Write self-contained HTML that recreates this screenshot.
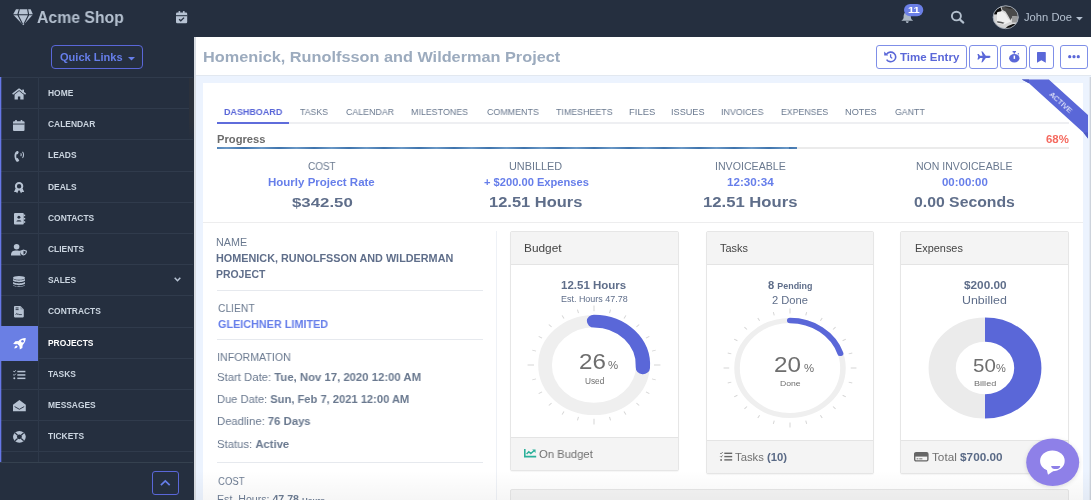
<!DOCTYPE html>
<html><head><meta charset="utf-8"><style>
html,body{margin:0;padding:0;}
body{width:1091px;height:500px;overflow:hidden;position:relative;background:#252f3f;font-family:"Liberation Sans",sans-serif;}
.t{position:absolute;white-space:nowrap;transform-origin:0 0;will-change:transform;}
.t b{font-weight:700;}
.r{position:absolute;box-sizing:border-box;}
svg{position:absolute;overflow:visible;}


</style></head><body>
<div class="r" style="left:194px;top:37px;width:897px;height:38px;background:#fff"></div>
<div class="r" style="left:194px;top:75px;width:897px;height:1px;background:#e2e8f0"></div>
<div class="r" style="left:196px;top:76px;width:895px;height:424px;background:#ecf3fe"></div>
<div class="r" style="left:194px;top:37px;width:2px;height:463px;background:#d9dde3"></div>
<div class="r" style="left:1089px;top:77px;width:1px;height:423px;background:#e2e8f1"></div>
<div class="r" style="left:1090px;top:77px;width:1px;height:423px;background:#cdd3dc"></div>
<div class="r" style="left:203px;top:83px;width:880px;height:417px;background:#fff"></div>
<div class="r" style="left:217px;top:122px;width:852px;height:2px;background:#eeeff2"></div>
<div class="r" style="left:217px;top:122px;width:72px;height:2px;background:#5f6cdb"></div>
<div class="r" style="left:217px;top:147px;width:852px;height:2px;background:#ebebeb"></div>
<div class="r" style="left:217px;top:147px;width:580px;height:2px;background:repeating-linear-gradient(90deg,#3f74ad 0px,#6a98c6 17.5px,#3f74ad 35px);background-position:-8px 0"></div>
<div class="r" style="left:203px;top:222px;width:880px;height:1px;background:#ededee"></div>
<div class="r" style="left:217px;top:290px;width:266px;height:1px;background:#e6e9ee"></div>
<div class="r" style="left:217px;top:339px;width:266px;height:1px;background:#e6e9ee"></div>
<div class="r" style="left:217px;top:462px;width:266px;height:1px;background:#e6e9ee"></div>
<div class="r" style="left:496px;top:231px;width:1px;height:269px;background:#eef1f6"></div>
<div class="r" style="left:510px;top:231px;width:169px;height:240px;background:#fff;border:1px solid #e6e6e6;border-radius:2px;box-shadow:0 1px 1px rgba(0,0,0,.04)"></div>
<div class="r" style="left:511px;top:232px;width:167px;height:33px;background:#f4f4f4;border-bottom:1px solid #e4e4e4"></div>
<div class="r" style="left:511px;top:437px;width:167px;height:33px;background:#f4f4f4;border-top:1px solid #e4e4e4"></div>
<div class="r" style="left:706px;top:231px;width:168px;height:243px;background:#fff;border:1px solid #e6e6e6;border-radius:2px;box-shadow:0 1px 1px rgba(0,0,0,.04)"></div>
<div class="r" style="left:707px;top:232px;width:166px;height:33px;background:#f4f4f4;border-bottom:1px solid #e4e4e4"></div>
<div class="r" style="left:707px;top:440px;width:166px;height:33px;background:#f4f4f4;border-top:1px solid #e4e4e4"></div>
<div class="r" style="left:900px;top:231px;width:169px;height:243px;background:#fff;border:1px solid #e6e6e6;border-radius:2px;box-shadow:0 1px 1px rgba(0,0,0,.04)"></div>
<div class="r" style="left:901px;top:232px;width:167px;height:33px;background:#f4f4f4;border-bottom:1px solid #e4e4e4"></div>
<div class="r" style="left:901px;top:440px;width:167px;height:33px;background:#f4f4f4;border-top:1px solid #e4e4e4"></div>
<div class="r" style="left:510px;top:489px;width:559px;height:31px;background:#f4f4f4;border:1px solid #e6e6e6;border-radius:2px"></div>
<div class="r" style="left:194px;top:470px;width:897px;height:30px;background:linear-gradient(rgba(0,0,0,0),rgba(0,0,0,.035))"></div>
<div class="r" style="left:0px;top:77.0px;width:193px;height:1.0px;background:#303b4c"></div>
<div class="r" style="left:0px;top:108.2px;width:193px;height:1.0px;background:#303b4c"></div>
<div class="r" style="left:0px;top:139.4px;width:193px;height:1.0px;background:#303b4c"></div>
<div class="r" style="left:0px;top:170.6px;width:193px;height:1.0px;background:#303b4c"></div>
<div class="r" style="left:0px;top:201.8px;width:193px;height:1.0px;background:#303b4c"></div>
<div class="r" style="left:0px;top:233.0px;width:193px;height:1.0px;background:#303b4c"></div>
<div class="r" style="left:0px;top:264.2px;width:193px;height:1.0px;background:#303b4c"></div>
<div class="r" style="left:0px;top:295.4px;width:193px;height:1.0px;background:#303b4c"></div>
<div class="r" style="left:0px;top:326.6px;width:193px;height:1.0px;background:#303b4c"></div>
<div class="r" style="left:0px;top:357.8px;width:193px;height:1.0px;background:#303b4c"></div>
<div class="r" style="left:0px;top:389.0px;width:193px;height:1.0px;background:#303b4c"></div>
<div class="r" style="left:0px;top:420.2px;width:193px;height:1.0px;background:#303b4c"></div>
<div class="r" style="left:0px;top:451.4px;width:193px;height:1.0px;background:#303b4c"></div>
<div class="r" style="left:189px;top:78px;width:5px;height:62px;background:linear-gradient(#2b313c 70%,rgba(43,49,60,0))"></div>
<div class="r" style="left:0px;top:462px;width:193px;height:1px;background:#35414f"></div>
<div class="r" style="left:38px;top:77px;width:1px;height:385px;background:#2e394a"></div>
<div class="r" style="left:0px;top:77px;width:1px;height:385px;background:#6677e6"></div>
<div class="r" style="left:1px;top:77px;width:1px;height:385px;background:rgba(102,119,230,.3)"></div>
<div class="r" style="left:0px;top:326px;width:38px;height:35px;background:#6a7fe4"></div>
<div class="r" style="left:152px;top:471px;width:27px;height:24px;border:1px solid #5a67d8;border-radius:3px"></div>
<div class="r" style="left:51px;top:45px;width:92px;height:24px;border:1.5px solid #5a67d8;border-radius:4px"></div>
<div class="r" style="left:876px;top:45px;width:91px;height:24px;border:1px solid #7f8fe8;border-radius:3px;background:#fff"></div>
<div class="r" style="left:969px;top:45px;width:29px;height:24px;border:1px solid #7f8fe8;border-radius:3px;background:#fff"></div>
<div class="r" style="left:1000px;top:45px;width:27px;height:24px;border:1px solid #7f8fe8;border-radius:3px;background:#fff"></div>
<div class="r" style="left:1029px;top:45px;width:25px;height:24px;border:1px solid #7f8fe8;border-radius:3px;background:#fff"></div>
<div class="r" style="left:1060px;top:45px;width:28px;height:24px;border:1px solid #7f8fe8;border-radius:3px;background:#fff"></div>
<svg style="left:524.2px;top:294.7px;transform:scaleX(1.115);transform-origin:70.0px 70.0px" width="140" height="140" viewBox="0 0 140 140"><circle cx="70.0" cy="70.0" r="43.9" stroke="#efefef" stroke-width="12.3" fill="none"/><path d="M70.0,26.1 A43.9,43.9 0 0 1 113.813,72.757" stroke="#5a67d8" stroke-width="12.8" fill="none" stroke-linecap="round"/><path d="M70.00,16.20 L70.00,10.40 M83.92,18.03 L84.83,14.65 M96.90,23.41 L98.65,20.38 M108.04,31.96 L110.52,29.48 M116.59,43.10 L119.62,41.35 M121.97,56.08 L125.35,55.17 M123.80,70.00 L129.60,70.00 M121.97,83.92 L125.35,84.83 M116.59,96.90 L119.62,98.65 M108.04,108.04 L110.52,110.52 M96.90,116.59 L98.65,119.62 M83.92,121.97 L84.83,125.35 M70.00,123.80 L70.00,129.60 M56.08,121.97 L55.17,125.35 M43.10,116.59 L41.35,119.62 M31.96,108.04 L29.48,110.52 M23.41,96.90 L20.38,98.65 M18.03,83.92 L14.65,84.83 M16.20,70.00 L10.40,70.00 M18.03,56.08 L14.65,55.17 M23.41,43.10 L20.38,41.35 M31.96,31.96 L29.48,29.48 M43.10,23.41 L41.35,20.38 M56.08,18.03 L55.17,14.65" stroke="#d6d6d6" stroke-width="0.9" fill="none"/></svg>
<svg style="left:719.5px;top:298.0px;transform:scaleX(1.115);transform-origin:70.0px 70.0px" width="140" height="140" viewBox="0 0 140 140"><circle cx="70.0" cy="70.0" r="47.5" stroke="#efefef" stroke-width="5.0" fill="none"/><path d="M70.0,22.5 A47.5,47.5 0 0 1 115.175,55.322" stroke="#5a67d8" stroke-width="5.4" fill="none" stroke-linecap="round"/><path d="M70.00,15.50 L70.00,10.40 M84.11,17.36 L84.96,14.17 M97.25,22.80 L98.90,19.94 M108.54,31.46 L110.87,29.13 M117.20,42.75 L120.06,41.10 M122.64,55.89 L125.83,55.04 M124.50,70.00 L129.60,70.00 M122.64,84.11 L125.83,84.96 M117.20,97.25 L120.06,98.90 M108.54,108.54 L110.87,110.87 M97.25,117.20 L98.90,120.06 M84.11,122.64 L84.96,125.83 M70.00,124.50 L70.00,129.60 M55.89,122.64 L55.04,125.83 M42.75,117.20 L41.10,120.06 M31.46,108.54 L29.13,110.87 M22.80,97.25 L19.94,98.90 M17.36,84.11 L14.17,84.96 M15.50,70.00 L10.40,70.00 M17.36,55.89 L14.17,55.04 M22.80,42.75 L19.94,41.10 M31.46,31.46 L29.13,29.13 M42.75,22.80 L41.10,19.94 M55.89,17.36 L55.04,14.17" stroke="#d6d6d6" stroke-width="0.9" fill="none"/></svg>
<svg style="left:915.4px;top:298.1px;transform:scaleX(1.115);transform-origin:70.0px 70.0px" width="140" height="140" viewBox="0 0 140 140"><path d="M70.0,31.6 A38.4,38.4 0 0 1 70.0,108.4" stroke="#5a67d8" stroke-width="24.4" fill="none"/><path d="M70.0,108.4 A38.4,38.4 0 0 1 70.0,31.6" stroke="#ebebeb" stroke-width="24.4" fill="none"/></svg>
<svg style="left:1018px;top:75px" width="73" height="68" viewBox="1018 75 73 68"><polygon points="1021.8,79.4 1048.8,79.4 1088,115 1088,138.4 1083.3,132.6 1029,83.2" fill="#5a67d8"/><polygon points="1021.8,79.4 1029,79.4 1029,83.2" fill="#4d5ac4"/><polygon points="1083.3,132.6 1088,132.6 1088,138.4" fill="#4d5ac4"/></svg>
<div class="t" style="left:1043px;top:98px;width:36px;text-align:center;font-size:7.6px;line-height:9px;color:#fff;transform:rotate(42deg);transform-origin:50% 50%">ACTIVE</div>
<svg style="left:1024px;top:436px;filter:drop-shadow(0 1px 2px rgba(0,0,0,.12))" width="58" height="54" viewBox="1024 436 58 54"><ellipse cx="1052.7" cy="462.3" rx="26.5" ry="23.8" fill="#8e80e8"/><ellipse cx="1052.4" cy="460.9" rx="12.3" ry="10.4" fill="#fff"/><polygon points="1046.5,468.5 1054,470.5 1048,474.8" fill="#fff"/><path d="M1051.1,465.9 H1060.3 C1060,468 1058,469.1 1055.7,469.1 C1053.4,469.1 1051.4,468 1051.1,465.9 Z" fill="#8e80e8"/></svg>
<svg style="left:13px;top:8.5px;" width="20" height="16.5" viewBox="0 0 20 16.5"><polygon points="0,5.4 3,0.2 17.7,0.2 20,5.4 10.3,16.3" fill="#b7c3d3"/><path d="M0,5.8 H20 M6.4,0.2 L4.8,5.8 L9.5,15 M14.6,0.2 L15.7,5.8 L11,15" stroke="#252f3f" stroke-width="1.1" fill="none"/></svg>
<svg style="left:176px;top:10.8px;" width="11.2" height="12.2" viewBox="0 0 11.2 12.2"><rect x="0" y="1.5" width="11.2" height="10.7" rx="1.2" fill="#b7c3d3"/><rect x="2.6" y="0" width="1.6" height="3" rx=".6" fill="#b7c3d3"/><rect x="7" y="0" width="1.6" height="3" rx=".6" fill="#b7c3d3"/><rect x="0" y="4.2" width="11.2" height="1" fill="#252f3f"/><path d="M3.1,8.2 L4.8,9.8 L8.1,6.6" stroke="#252f3f" stroke-width="1.3" fill="none"/></svg>
<svg style="left:127.5px;top:57px;" width="7" height="3.5" viewBox="0 0 7 3.5"><polygon points="0,0 7,0 3.5,3.5" fill="#667eea"/></svg>
<svg style="left:900.5px;top:11px;" width="12.5" height="12.5" viewBox="0 0 12.5 12.5"><path d="M6.25,1 C3,1 2.6,4 2.6,6.5 C2.6,8 1.2,9 0.4,9.7 H12.1 C11.3,9 9.9,8 9.9,6.5 C9.9,4 9.5,1 6.25,1 Z" fill="#aab6c4"/><path d="M4.8,10.2 H7.7 C7.7,11.2 7,12 6.25,12 C5.5,12 4.8,11.2 4.8,10.2Z" fill="#aab6c4"/></svg>
<svg style="left:903.8px;top:4.1px;" width="19.3" height="12.2" viewBox="0 0 19.3 12.2"><rect x="0" y="0" width="19.3" height="12.2" rx="6.1" fill="#6b7fe6"/></svg>
<svg style="left:950px;top:9.5px;" width="15" height="14" viewBox="0 0 15 14"><ellipse cx="6.4" cy="6.1" rx="4.5" ry="4.3" stroke="#b3bfcd" stroke-width="1.9" fill="none"/><path d="M9.7,9.4 L13.3,12.6" stroke="#b3bfcd" stroke-width="2.1" stroke-linecap="round"/></svg>
<svg style="left:992px;top:4.5px" width="27.5" height="24.5" viewBox="992 4.5 27.5 24.5"><defs><clipPath id="av"><ellipse cx="1005.7" cy="16.75" rx="12.6" ry="11.45"/></clipPath></defs><g clip-path="url(#av)"><rect x="992" y="4" width="28" height="26" fill="#d4d4d4"/><path d="M1001,5 L1019,5 L1019,16.5 L1013,15.5 L1010.5,19.5 L1008,15 L1005.5,11 L1002.5,9.5 Z" fill="#4a4a4a"/><path d="M1003,6 L1016,6 L1017,9 L1009,8 Z" fill="#2a2a2a"/><path d="M1012,15.5 L1019,16 L1019,22 L1012,22 Z" fill="#9a9a9a"/><path d="M992,13.8 L997,8.5 L1000.6,6.8 L1001.6,10 L999.8,12.3 L996.2,14 Z" fill="#0a0a0a"/><path d="M997,12 C1000,10 1004,11 1006,14 C1007,17 1009,19 1011,21 L1004,24 L997,23 Z" fill="#efefef"/><path d="M997,21 C999,20.5 1002,21.5 1004.5,22.3 L1003,23.2 C1000,22.8 998,22.5 997,21.8 Z" fill="#555"/><path d="M1004,29 L1008,25.6 L1013,23.4 L1016,23.6 L1017,29 Z" fill="#0d0d0d"/></g><ellipse cx="1005.7" cy="16.75" rx="12.6" ry="11.45" stroke="#a3acb8" stroke-width="0.9" fill="none"/></svg>
<svg style="left:1076.3px;top:16.9px;" width="6.8" height="3.4" viewBox="0 0 6.8 3.4"><polygon points="0,0 6.8,0 3.4,3.4" fill="#b4c0cf"/></svg>
<svg style="left:12px;top:88.8px;" width="14.2" height="10.5" viewBox="0 0 14.2 10.5"><path d="M0.6,5.2 L7.1,0.2 L13.6,5.2" stroke="#b7c3d3" stroke-width="1.5" fill="none" stroke-linejoin="round"/><rect x="10.2" y="0.6" width="1.8" height="3.2" fill="#b7c3d3"/><path d="M2.6,5.4 L7.1,1.9 L11.6,5.4 V10.5 H8.3 V7.4 H5.9 V10.5 H2.6 Z" fill="#b7c3d3"/></svg>
<svg style="left:13.4px;top:120px;" width="11.5" height="11" viewBox="0 0 11.5 11"><rect x="0" y="1.3" width="11.5" height="9.7" rx="1" fill="#b7c3d3"/><rect x="2.2" y="0" width="1.6" height="2.2" fill="#b7c3d3"/><rect x="7.7" y="0" width="1.6" height="2.2" fill="#b7c3d3"/><rect x="0" y="3.6" width="11.5" height=".9" fill="#252f3f"/></svg>
<svg style="left:13.6px;top:151.2px;" width="10.6" height="11.2" viewBox="0 0 10.6 11.2"><path d="M2.4,0.4 C0.2,1.6 -0.4,6.4 2.2,10.2 C2.7,10.9 3.6,11.1 4.3,10.6 L5.3,9.6 L3.7,7 L2.7,7.3 C2.1,5.9 2.1,4.4 2.8,3.1 L3.8,3.3 L4.8,0.9 L3.7,0.1 C3.3,-0.1 2.8,0.1 2.4,0.4Z" fill="#b7c3d3"/><path d="M6.7,2.4 C7.4,3 7.4,4.6 6.7,5.2 M8.5,0.8 C9.9,2.1 9.9,5.5 8.5,6.8" stroke="#b7c3d3" stroke-width="1.1" fill="none"/></svg>
<svg style="left:14px;top:181.8px;" width="10.2" height="11.2" viewBox="0 0 10.2 11.2"><circle cx="5.1" cy="4.3" r="3.2" stroke="#b7c3d3" stroke-width="2" fill="none"/><path d="M1.6,6.6 L0,10 L2.1,9.9 L3.2,11.2 L4.6,8.2 Z M8.6,6.6 L10.2,10 L8.1,9.9 L7,11.2 L5.6,8.2 Z" fill="#b7c3d3"/></svg>
<svg style="left:13.8px;top:213.2px;" width="11.2" height="11.4" viewBox="0 0 11.2 11.4"><rect x="0" y="0" width="9.8" height="11.4" rx="1" fill="#b7c3d3"/><rect x="9.8" y="1.6" width="1.4" height="1.6" fill="#b7c3d3"/><rect x="9.8" y="4.9" width="1.4" height="1.6" fill="#b7c3d3"/><rect x="9.8" y="8.2" width="1.4" height="1.6" fill="#b7c3d3"/><circle cx="4.9" cy="4.3" r="1.5" fill="#252f3f"/><path d="M2.4,8.6 C2.4,6.9 7.4,6.9 7.4,8.6 Z" fill="#252f3f"/></svg>
<svg style="left:11px;top:244.2px;" width="16" height="11.6" viewBox="0 0 16 11.6"><circle cx="5.6" cy="2.8" r="2.8" fill="#b7c3d3"/><path d="M0,11.6 C0,7.5 1.6,6.4 5.6,6.4 C7.5,6.4 8.5,6.6 9.2,7 L9.2,9.5 C9.2,10.3 9.5,11 10,11.6 Z" fill="#b7c3d3"/><path d="M12.5,5.6 L16,6.8 C16,9.5 14.5,11 12.5,11.6 C10.5,11 9,9.5 9,6.8 Z" fill="#b7c3d3"/><path d="M12.5,6.8 L14.8,7.6 C14.7,9.3 13.8,10.2 12.5,10.6 Z" fill="#252f3f"/></svg>
<svg style="left:13.2px;top:275.6px;" width="12" height="11" viewBox="0 0 12 11"><ellipse cx="6" cy="1.9" rx="6" ry="1.9" fill="#b7c3d3"/><path d="M0,2.6 V4.3 C0,5.4 2.7,6.2 6,6.2 C9.3,6.2 12,5.4 12,4.3 V2.6 C12,3.7 9.3,4.5 6,4.5 C2.7,4.5 0,3.7 0,2.6Z" fill="#b7c3d3"/><path d="M0,5.6 V7.3 C0,8.4 2.7,9.2 6,9.2 C9.3,9.2 12,8.4 12,7.3 V5.6 C12,6.7 9.3,7.5 6,7.5 C2.7,7.5 0,6.7 0,5.6Z" fill="#b7c3d3"/><path d="M0,8.4 V9.1 C0,10.2 2.7,11 6,11 C9.3,11 12,10.2 12,9.1 V8.4 C12,9.5 9.3,10.3 6,10.3 C2.7,10.3 0,9.5 0,8.4Z" fill="#b7c3d3"/></svg>
<svg style="left:14.2px;top:306.4px;" width="9.8" height="11.4" viewBox="0 0 9.8 11.4"><path d="M0,0.8 C0,.3 .3,0 .8,0 H6.4 L9.8,3.4 V10.6 C9.8,11.1 9.5,11.4 9,11.4 H.8 C.3,11.4 0,11.1 0,10.6Z" fill="#b7c3d3"/><path d="M6.4,0 V3.4 H9.8" fill="#8f9bab"/><rect x="1.6" y="1.5" width="3" height=".9" fill="#252f3f"/><rect x="1.6" y="3.2" width="3" height=".9" fill="#252f3f"/><path d="M1.7,8.8 C2.5,7 3.2,7 3.4,8.4 C3.8,7.6 4.4,7.6 4.8,8.6 L7.9,8.6" stroke="#252f3f" stroke-width=".8" fill="none"/></svg>
<svg style="left:12.6px;top:337.6px;" width="12.8" height="11.4" viewBox="0 0 12.8 11.4"><path d="M12.7,0.1 C10.3,0 7.3,0.9 5,3.4 L3.5,5.2 L7.5,9 L9.3,7.4 C11.8,5.2 12.8,2.4 12.7,0.1 Z" fill="#fff"/><path d="M5.4,3 L2.4,3.2 L0.1,5.9 L3.6,6.3 Z" fill="#fff"/><path d="M9.6,7.1 L9.4,10.1 L6.8,11.4 L6.5,8 Z" fill="#fff"/><path d="M3.4,7.4 C2.1,7.8 1.4,9.2 1.3,10.6 C2.8,10.5 4.2,9.9 4.7,8.6 Z" fill="#fff"/><circle cx="9.5" cy="3.2" r="1.25" fill="#6a7fe4"/></svg>
<svg style="left:13px;top:369.6px;" width="12.4" height="9.6" viewBox="0 0 12.4 9.6"><path d="M0.3,1.2 L1.2,2 L2.8,0.3 M0.3,4.6 L1.2,5.4 L2.8,3.7" stroke="#b7c3d3" stroke-width="1" fill="none"/><circle cx="1.3" cy="8.3" r="1" fill="#b7c3d3"/><rect x="4.3" y="0.8" width="8.1" height="1.5" fill="#b7c3d3"/><rect x="4.3" y="4.2" width="8.1" height="1.5" fill="#b7c3d3"/><rect x="4.3" y="7.6" width="8.1" height="1.5" fill="#b7c3d3"/></svg>
<svg style="left:12.6px;top:399.8px;" width="12.8" height="11.2" viewBox="0 0 12.8 11.2"><path d="M0,4.8 L6.4,0 L12.8,4.8 V11.2 H0 Z" fill="#b7c3d3"/><path d="M1.6,6.6 L6.4,9.3 L11.2,6.6" stroke="#252f3f" stroke-width=".9" fill="none"/></svg>
<svg style="left:12.6px;top:430.8px;" width="12.8" height="11.7" viewBox="0 0 12.8 11.7"><ellipse cx="6.4" cy="5.85" rx="6.4" ry="5.85" fill="#b7c3d3"/><ellipse cx="6.4" cy="5.85" rx="2.5" ry="2.3" fill="#252f3f"/><path d="M2.1,1.9 L4.6,4.2 M10.7,1.9 L8.2,4.2 M2.1,9.8 L4.6,7.5 M10.7,9.8 L8.2,7.5" stroke="#252f3f" stroke-width="1.2"/></svg>
<svg style="left:174px;top:277.4px;" width="7" height="4.6" viewBox="0 0 7 4.6"><path d="M0.7,0.7 L3.5,3.7 L6.3,0.7" stroke="#b7c3d3" stroke-width="1.5" fill="none"/></svg>
<svg style="left:160.2px;top:480.2px;" width="10.6" height="6" viewBox="0 0 10.6 6"><path d="M0.9,5.2 L5.3,1 L9.7,5.2" stroke="#667eea" stroke-width="1.7" fill="none"/></svg>
<svg style="left:884px;top:51.2px;" width="12.4" height="11.2" viewBox="0 0 12.4 11.2"><path d="M2.6,3.2 A5,4.8 0 1 1 2.6,8.6" stroke="#5a67d8" stroke-width="1.6" fill="none"/><polygon points="0.2,0.6 0.2,4.6 4.2,4.6" fill="#5a67d8"/><path d="M6.6,3.2 V5.9 L8.2,7.4" stroke="#5a67d8" stroke-width="1.3" fill="none"/></svg>
<svg style="left:976.8px;top:51.1px;" width="13.5" height="11.7" viewBox="0 0 13.5 11.7"><path d="M4.4,0.2 C5.2,0.2 5.8,.6 6.2,1.2 L8.8,4.8 H12 C12.9,4.8 13.5,5.3 13.5,5.85 C13.5,6.4 12.9,6.9 12,6.9 H8.8 L6.2,10.5 C5.8,11.1 5.2,11.5 4.4,11.5 L5.6,6.9 H3 L1.7,8.6 H0.4 L1.2,5.85 L0.4,3.1 H1.7 L3,4.8 H5.6 Z" fill="#5a67d8"/></svg>
<svg style="left:1008.6px;top:51.1px;" width="10.5" height="11.4" viewBox="0 0 10.5 11.4"><rect x="3.6" y="0" width="3.4" height="1.3" fill="#5a67d8"/><rect x="4.6" y="1" width="1.4" height="1.6" fill="#5a67d8"/><path d="M8.3,3 L9.4,2 L10.2,2.8 L9.2,3.8Z" fill="#5a67d8"/><ellipse cx="5.3" cy="7.2" rx="5.2" ry="4.2" fill="#5a67d8"/><rect x="4.6" y="4.6" width="1.5" height="3.3" fill="#fff"/></svg>
<svg style="left:1037.2px;top:51.5px;" width="8.8" height="10.7" viewBox="0 0 8.8 10.7"><path d="M0,0.6 C0,.2 .3,0 .6,0 H8.2 C8.5,0 8.8,.2 8.8,.6 V10.7 L4.4,8.2 L0,10.7 Z" fill="#5a67d8"/></svg>
<svg style="left:1067.9px;top:55.3px;" width="12" height="3.4" viewBox="0 0 12 3.4"><circle cx="1.7" cy="1.7" r="1.6" fill="#5a67d8"/><circle cx="6" cy="1.7" r="1.6" fill="#5a67d8"/><circle cx="10.3" cy="1.7" r="1.6" fill="#5a67d8"/></svg>
<svg style="left:524px;top:449.4px;" width="12.2" height="8.4" viewBox="0 0 12.2 8.4"><path d="M0.8,0 V7.6 H12.2" stroke="#2bb09a" stroke-width="1.6" fill="none"/><path d="M2.6,5 L4.8,2.8 L6.8,4.6 L10,1.8" stroke="#2bb09a" stroke-width="1.5" fill="none"/><polygon points="8.2,0.6 11.6,0.6 11.6,4 " fill="#2bb09a"/></svg>
<svg style="left:719.8px;top:452.2px;" width="12.2" height="8.8" viewBox="0 0 12.2 8.8"><path d="M0.2,1 L1,1.8 L2.6,0.2 M0.2,4.4 L1,5.2 L2.6,3.6" stroke="#666" stroke-width="1" fill="none"/><circle cx="1.1" cy="8" r=".9" fill="#666"/><rect x="4.3" y="0.6" width="7.9" height="1.4" fill="#666"/><rect x="4.3" y="3.9" width="7.9" height="1.4" fill="#666"/><rect x="4.3" y="7.2" width="7.9" height="1.4" fill="#666"/></svg>
<svg style="left:914.2px;top:452px;" width="14.6" height="9.6" viewBox="0 0 14.6 9.6"><rect x="0.7" y="0.7" width="13.2" height="8.2" rx="1.3" stroke="#666" stroke-width="1.4" fill="none"/><rect x="0.7" y="1" width="13.2" height="3.6" fill="#666"/><rect x="2.6" y="6.2" width="1.8" height="1.2" fill="#888"/><rect x="5.2" y="6.2" width="3.2" height="1.2" fill="#888"/></svg>
<div class="t" id="logo" style="left:36.71px;top:10.00px;font-size:15.99px;line-height:15.99px;font-weight:700;color:#b4c0cf;transform:scaleX(0.9862);">Acme Shop</div>
<div class="t" id="quick" style="left:59.80px;top:52.00px;font-size:10.76px;line-height:10.76px;font-weight:700;color:#667eea;transform:scaleX(1.0279);">Quick Links</div>
<div class="t" id="john" style="left:1023.50px;top:12.00px;font-size:10.76px;line-height:10.76px;font-weight:400;color:#b4c0cf;transform:scaleX(1.0413);">John Doe</div>
<div class="t" id="badge" style="left:907.50px;top:6.00px;font-size:9.30px;line-height:9.30px;font-weight:700;color:#ffffff;transform:scaleX(1.2000);">11</div>
<div class="t" id="side0" style="left:48.21px;top:89.00px;font-size:8.43px;line-height:8.43px;font-weight:700;color:#cbd5e0;">HOME</div>
<div class="t" id="side1" style="left:48.21px;top:120.00px;font-size:8.43px;line-height:8.43px;font-weight:700;color:#cbd5e0;">CALENDAR</div>
<div class="t" id="side2" style="left:48.21px;top:151.00px;font-size:8.43px;line-height:8.43px;font-weight:700;color:#cbd5e0;">LEADS</div>
<div class="t" id="side3" style="left:48.21px;top:183.00px;font-size:8.43px;line-height:8.43px;font-weight:700;color:#cbd5e0;">DEALS</div>
<div class="t" id="side4" style="left:48.21px;top:214.00px;font-size:8.43px;line-height:8.43px;font-weight:700;color:#cbd5e0;">CONTACTS</div>
<div class="t" id="side5" style="left:48.21px;top:245.00px;font-size:8.43px;line-height:8.43px;font-weight:700;color:#cbd5e0;">CLIENTS</div>
<div class="t" id="side6" style="left:48.21px;top:276.00px;font-size:8.43px;line-height:8.43px;font-weight:700;color:#cbd5e0;">SALES</div>
<div class="t" id="side7" style="left:48.21px;top:307.00px;font-size:8.43px;line-height:8.43px;font-weight:700;color:#cbd5e0;">CONTRACTS</div>
<div class="t" id="side8" style="left:48.21px;top:339.00px;font-size:8.43px;line-height:8.43px;font-weight:700;color:#ffffff;">PROJECTS</div>
<div class="t" id="side9" style="left:48.21px;top:370.00px;font-size:8.43px;line-height:8.43px;font-weight:700;color:#cbd5e0;">TASKS</div>
<div class="t" id="side10" style="left:48.21px;top:401.00px;font-size:8.43px;line-height:8.43px;font-weight:700;color:#cbd5e0;">MESSAGES</div>
<div class="t" id="side11" style="left:48.21px;top:432.00px;font-size:8.43px;line-height:8.43px;font-weight:700;color:#cbd5e0;">TICKETS</div>
<div class="t" id="title" style="left:202.93px;top:49.00px;font-size:15.26px;line-height:15.26px;font-weight:700;color:#9cabbe;transform:scaleX(1.0676);">Homenick, Runolfsson and Wilderman Project</div>
<div class="t" id="timeentry" style="left:899.80px;top:52.00px;font-size:10.76px;line-height:10.76px;font-weight:700;color:#5a67d8;transform:scaleX(1.0709);">Time Entry</div>
<div class="t" id="tab0" style="left:224.41px;top:108.00px;font-size:9.16px;line-height:9.16px;font-weight:600;color:#5a67d8;transform:scaleX(0.9780);">DASHBOARD</div>
<div class="t" id="tab1" style="left:300.00px;top:108.00px;font-size:9.16px;line-height:9.16px;font-weight:400;color:#6a798f;transform:scaleX(0.9517);">TASKS</div>
<div class="t" id="tab2" style="left:345.80px;top:108.00px;font-size:9.16px;line-height:9.16px;font-weight:400;color:#6a798f;transform:scaleX(0.9633);">CALENDAR</div>
<div class="t" id="tab3" style="left:410.83px;top:108.00px;font-size:9.16px;line-height:9.16px;font-weight:400;color:#6a798f;transform:scaleX(0.9690);">MILESTONES</div>
<div class="t" id="tab4" style="left:486.50px;top:108.00px;font-size:9.16px;line-height:9.16px;font-weight:400;color:#6a798f;transform:scaleX(0.9717);">COMMENTS</div>
<div class="t" id="tab5" style="left:555.91px;top:108.00px;font-size:9.16px;line-height:9.16px;font-weight:400;color:#6a798f;transform:scaleX(0.9672);">TIMESHEETS</div>
<div class="t" id="tab6" style="left:628.68px;top:108.00px;font-size:9.16px;line-height:9.16px;font-weight:400;color:#6a798f;transform:scaleX(1.0333);">FILES</div>
<div class="t" id="tab7" style="left:671.12px;top:108.00px;font-size:9.16px;line-height:9.16px;font-weight:400;color:#6a798f;transform:scaleX(0.9875);">ISSUES</div>
<div class="t" id="tab8" style="left:721.25px;top:108.00px;font-size:9.16px;line-height:9.16px;font-weight:400;color:#6a798f;transform:scaleX(0.9674);">INVOICES</div>
<div class="t" id="tab9" style="left:781.35px;top:108.00px;font-size:9.16px;line-height:9.16px;font-weight:400;color:#6a798f;transform:scaleX(0.9542);">EXPENSES</div>
<div class="t" id="tab10" style="left:845.40px;top:108.00px;font-size:9.16px;line-height:9.16px;font-weight:400;color:#6a798f;transform:scaleX(1.0067);">NOTES</div>
<div class="t" id="tab11" style="left:894.91px;top:108.00px;font-size:9.16px;line-height:9.16px;font-weight:400;color:#6a798f;transform:scaleX(0.9581);">GANTT</div>
<div class="t" id="progress" style="left:216.72px;top:135.00px;font-size:10.32px;line-height:10.32px;font-weight:700;color:#6b6b6b;transform:scaleX(1.0837);">Progress</div>
<div class="t" id="pct68" style="left:1046.00px;top:135.00px;font-size:10.47px;line-height:10.47px;font-weight:700;color:#f56a5f;transform:scaleX(1.0905);">68%</div>
<div class="t" id="s_cost" style="left:307.71px;top:162.00px;font-size:10.32px;line-height:10.32px;font-weight:400;color:#6a798f;transform:scaleX(0.9643);">COST</div>
<div class="t" id="s_hpr" style="left:267.61px;top:178.00px;font-size:10.47px;line-height:10.47px;font-weight:700;color:#667eea;transform:scaleX(1.0990);">Hourly Project Rate</div>
<div class="t" id="s_342" style="left:291.71px;top:196.00px;font-size:13.66px;line-height:13.66px;font-weight:700;color:#5f6e8a;transform:scaleX(1.2306);">$342.50</div>
<div class="t" id="s_unb" style="left:509.35px;top:162.00px;font-size:10.32px;line-height:10.32px;font-weight:400;color:#6a798f;transform:scaleX(1.0551);">UNBILLED</div>
<div class="t" id="s_exp" style="left:483.91px;top:178.00px;font-size:10.17px;line-height:10.17px;font-weight:700;color:#667eea;transform:scaleX(1.0958);">+ $200.00 Expenses</div>
<div class="t" id="s_1251" style="left:489.33px;top:195.00px;font-size:14.10px;line-height:14.10px;font-weight:700;color:#5f6e8a;transform:scaleX(1.1679);">12.51 Hours</div>
<div class="t" id="s_inv" style="left:714.58px;top:162.00px;font-size:10.32px;line-height:10.32px;font-weight:400;color:#6a798f;transform:scaleX(1.0299);">INVOICEABLE</div>
<div class="t" id="s_123034" style="left:726.80px;top:178.00px;font-size:10.10px;line-height:10.10px;font-weight:700;color:#667eea;transform:scaleX(1.1550);">12:30:34</div>
<div class="t" id="s_1251b" style="left:702.82px;top:195.00px;font-size:14.10px;line-height:14.10px;font-weight:700;color:#5f6e8a;transform:scaleX(1.1821);">12.51 Hours</div>
<div class="t" id="s_noninv" style="left:915.89px;top:162.00px;font-size:10.32px;line-height:10.32px;font-weight:400;color:#6a798f;transform:scaleX(1.0215);">NON INVOICEABLE</div>
<div class="t" id="s_000" style="left:941.71px;top:178.00px;font-size:10.10px;line-height:10.10px;font-weight:700;color:#667eea;transform:scaleX(1.1350);">00:00:00</div>
<div class="t" id="s_sec" style="left:914.00px;top:195.00px;font-size:14.10px;line-height:14.10px;font-weight:700;color:#5f6e8a;transform:scaleX(1.1200);">0.00 Seconds</div>
<div class="t" id="name" style="left:216.49px;top:237.00px;font-size:10.61px;line-height:10.61px;font-weight:400;color:#6a798f;transform:scaleX(1.0138);">NAME</div>
<div class="t" id="name1" style="left:216.43px;top:254.00px;font-size:10.17px;line-height:10.17px;font-weight:700;color:#5f6e8a;transform:scaleX(1.0665);">HOMENICK, RUNOLFSSON AND WILDERMAN</div>
<div class="t" id="name2" style="left:216.47px;top:270.00px;font-size:10.17px;line-height:10.17px;font-weight:700;color:#5f6e8a;transform:scaleX(1.0277);">PROJECT</div>
<div class="t" id="client" style="left:217.50px;top:302.00px;font-size:11.63px;line-height:11.63px;font-weight:400;color:#6a798f;transform:scaleX(0.8878);">CLIENT</div>
<div class="t" id="client2" style="left:217.50px;top:319.00px;font-size:11.48px;line-height:11.48px;font-weight:700;color:#667eea;transform:scaleX(0.9440);">GLEICHNER LIMITED</div>
<div class="t" id="info" style="left:216.58px;top:351.00px;font-size:11.63px;line-height:11.63px;font-weight:400;color:#6a798f;transform:scaleX(0.9177);">INFORMATION</div>
<div class="t" id="start" style="left:216.53px;top:371.00px;font-size:11.63px;line-height:11.63px;font-weight:400;color:#6a798f;transform:scaleX(0.9745);">Start Date: <b>Tue, Nov 17, 2020 12:00 AM</b></div>
<div class="t" id="due" style="left:216.54px;top:393.00px;font-size:11.63px;line-height:11.63px;font-weight:400;color:#6a798f;transform:scaleX(0.9588);">Due Date: <b>Sun, Feb 7, 2021 12:00 AM</b></div>
<div class="t" id="deadline" style="left:216.53px;top:415.00px;font-size:11.63px;line-height:11.63px;font-weight:400;color:#6a798f;transform:scaleX(0.9716);">Deadline: <b>76 Days</b></div>
<div class="t" id="status" style="left:216.53px;top:438.00px;font-size:11.63px;line-height:11.63px;font-weight:400;color:#6a798f;transform:scaleX(0.9712);">Status: <b>Active</b></div>
<div class="t" id="cost2" style="left:217.50px;top:476.00px;font-size:11.05px;line-height:11.05px;font-weight:400;color:#6a798f;transform:scaleX(0.8645);">COST</div>
<div class="t" id="esth" style="left:216.50px;top:494.00px;font-size:10.61px;line-height:10.61px;font-weight:400;color:#6a798f;">Est. Hours: <b>47.78 <span style="font-size:75%">Hours</span></b></div>
<div class="t" id="c_budget" style="left:523.70px;top:242.00px;font-size:11.77px;line-height:11.77px;font-weight:400;color:#444444;transform:scaleX(1.0083);">Budget</div>
<div class="t" id="c_tasks" style="left:719.71px;top:243.00px;font-size:10.90px;line-height:10.90px;font-weight:400;color:#444444;">Tasks</div>
<div class="t" id="c_exp" style="left:914.50px;top:243.00px;font-size:10.90px;line-height:10.90px;font-weight:400;color:#444444;transform:scaleX(0.9957);">Expenses</div>
<div class="t" id="b_hours" style="left:561.39px;top:280.00px;font-size:11.34px;line-height:11.34px;font-weight:700;color:#5f6e8a;transform:scaleX(1.0159);">12.51 Hours</div>
<div class="t" id="b_est" style="left:560.94px;top:295.00px;font-size:8.43px;line-height:8.43px;font-weight:400;color:#5f6e8a;transform:scaleX(1.0623);">Est. Hours 47.78</div>
<div class="t" id="t_pend" style="left:767.61px;top:280.00px;font-size:10.61px;line-height:10.61px;font-weight:700;color:#5f6e8a;transform:scaleX(1.0524);">8 <span style="font-size:80%">Pending</span></div>
<div class="t" id="t_done" style="left:771.80px;top:295.00px;font-size:10.76px;line-height:10.76px;font-weight:400;color:#5f6e8a;transform:scaleX(1.0382);">2 Done</div>
<div class="t" id="e_200" style="left:963.80px;top:280.00px;font-size:10.90px;line-height:10.90px;font-weight:700;color:#5f6e8a;transform:scaleX(1.0821);">$200.00</div>
<div class="t" id="e_unb" style="left:962.41px;top:295.00px;font-size:11.34px;line-height:11.34px;font-weight:400;color:#5f6e8a;transform:scaleX(1.0949);">Unbilled</div>
<div class="t" id="b_26" style="left:578.74px;top:350.00px;font-size:22.82px;line-height:22.82px;font-weight:300;color:#6e6e6e;transform:scaleX(1.0583);">26</div>
<div class="t" id="b_pct" style="left:608.00px;top:360.00px;font-size:11.19px;line-height:11.19px;font-weight:400;color:#6e6e6e;transform:scaleX(1.0200);">%</div>
<div class="t" id="b_used" style="left:584.80px;top:377.00px;font-size:8.29px;line-height:8.29px;font-weight:400;color:#6e6e6e;transform:scaleX(0.9842);">Used</div>
<div class="t" id="t_20" style="left:773.94px;top:353.00px;font-size:22.82px;line-height:22.82px;font-weight:300;color:#6e6e6e;transform:scaleX(1.0625);">20</div>
<div class="t" id="t_pct" style="left:803.80px;top:363.00px;font-size:10.90px;line-height:10.90px;font-weight:400;color:#6e6e6e;transform:scaleX(1.0444);">%</div>
<div class="t" id="t_donel" style="left:779.80px;top:380.00px;font-size:7.70px;line-height:7.70px;font-weight:400;color:#6e6e6e;transform:scaleX(1.1222);">Done</div>
<div class="t" id="e_50" style="left:972.86px;top:357.00px;font-size:18.02px;line-height:18.02px;font-weight:300;color:#6e6e6e;transform:scaleX(1.1389);">50</div>
<div class="t" id="e_pct" style="left:995.50px;top:364.00px;font-size:10.47px;line-height:10.47px;font-weight:400;color:#6e6e6e;transform:scaleX(1.0556);">%</div>
<div class="t" id="e_billed" style="left:974.21px;top:380.00px;font-size:7.70px;line-height:7.70px;font-weight:400;color:#6e6e6e;transform:scaleX(1.1833);">Billed</div>
<div class="t" id="f_onb" style="left:539.41px;top:449.00px;font-size:11.48px;line-height:11.48px;font-weight:400;color:#707070;transform:scaleX(0.9800);">On Budget</div>
<div class="t" id="f_tasks" style="left:734.80px;top:452.00px;font-size:11.19px;line-height:11.19px;font-weight:400;color:#707070;transform:scaleX(1.0078);">Tasks <b style="color:#5a6a86">(10)</b></div>
<div class="t" id="f_total" style="left:931.80px;top:452.00px;font-size:11.34px;line-height:11.34px;font-weight:400;color:#707070;transform:scaleX(1.0368);">Total <b style="color:#5a6a86">$700.00</b></div>
</body></html>
